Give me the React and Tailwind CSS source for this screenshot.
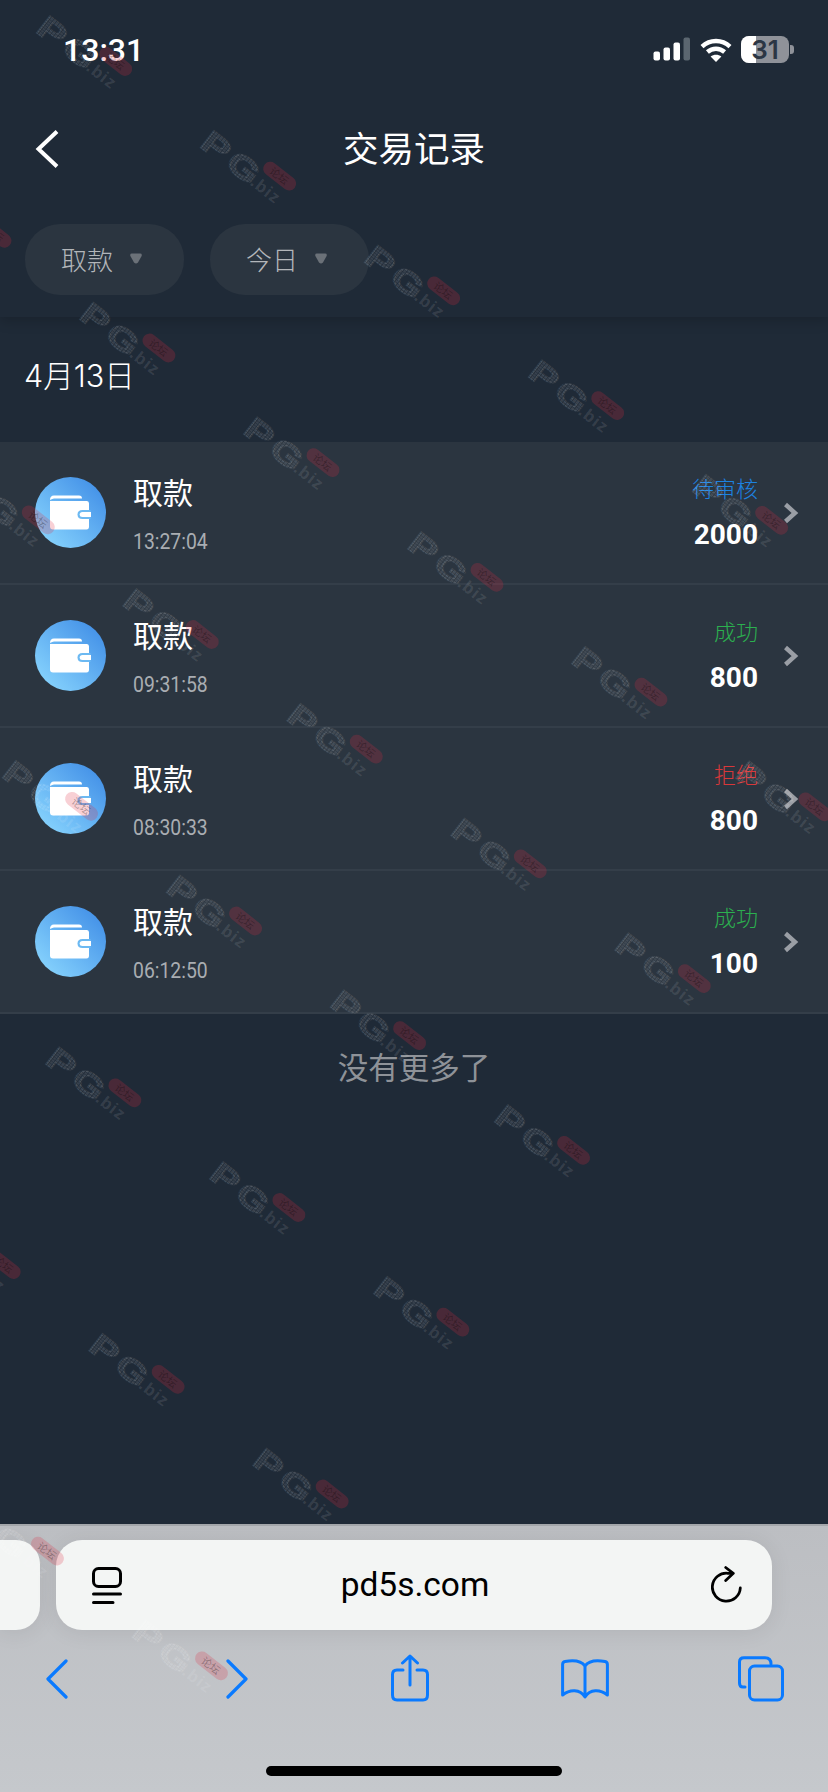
const CJK = "font-['Noto_Sans_CJK_SC','Noto_Sans',sans-serif]";

// Highest lattice column present in each watermark row, and the lowest worth drawing.
const MAX_COL = [4, 4, 3, 2, 1, 0, -1];
const MIN_COL = [0, -1, -1, -1, -1, -2, -2];

function Watermarks() {
  const marks = [];
  MAX_COL.forEach((max, n) => {
    for (let m = MIN_COL[n]; m <= max; m++) {
      marks.push([50 + 164 * m + 43.3 * n, 14 + 114.7 * m + 286.5 * n]);
    }
  });
  return (
    <svg className="absolute left-0 top-0 pointer-events-none" width="828" height="1792" viewBox="0 0 828 1792">
      <defs>
        <pattern id="wmDots" width="2.5" height="2.5" patternUnits="userSpaceOnUse">
          <rect width="2" height="2" fill="rgba(255,255,255,0.11)" />
        </pattern>
      </defs>
      {marks.map(([x, y], i) => (
        <g key={i} transform={`translate(${x} ${y}) rotate(38)`}>
          <g transform="scale(1.35 1)">
            <text x="-1" y="23" fontFamily="Liberation Sans" fontWeight="700" fontSize="31" fill="url(#wmDots)" stroke="url(#wmDots)" strokeWidth="1.6">P</text>
            <text x="23" y="23" fontFamily="Liberation Sans" fontWeight="700" fontSize="31" fill="url(#wmDots)" stroke="url(#wmDots)" strokeWidth="1.6">G</text>
          </g>
          <rect x="62" y="-10" width="38" height="14" rx="7" fill="rgba(222,42,62,0.22)" />
          <text x="70" y="1" fontFamily="Noto Sans CJK SC" fontSize="10.5" fill="rgba(0,0,0,0.3)">论坛</text>
          <text x="62" y="22" fontFamily="Liberation Sans" fontWeight="700" fontSize="17" letterSpacing="1.2" fill="rgba(255,255,255,0.11)">.biz</text>
        </g>
      ))}
    </svg>
  );
}

function StatusBar() {
  return (
    <div className="h-[99px] flex items-center justify-between pl-[63px] pr-[34px]">
      <span className="font-['Roboto',sans-serif] font-medium text-[32px] leading-none text-white">13:31</span>
      <div className="flex items-center">
        <svg width="38" height="24" viewBox="0 0 38 24" className="mt-[-1px]">
          <rect x="0.5" y="14.5" width="6.5" height="9" rx="2" fill="#fff" />
          <rect x="10.5" y="10.5" width="6.5" height="13" rx="2" fill="#fff" />
          <rect x="20.5" y="5.5" width="6.5" height="18" rx="2" fill="#fff" />
          <rect x="30.5" y="0.5" width="6.5" height="23" rx="2" fill="#5b6670" />
        </svg>
        <svg width="32" height="24" viewBox="0 0 32 24" className="ml-[9px]" fill="none" stroke="#fff" strokeWidth="4.4">
          <path d="M2 8.6 C10 1.2 22 1.2 30 8.6" />
          <path d="M7.4 14 C12.4 9.6 19.6 9.6 24.6 14" />
          <path d="M16 24 L10.6 18.6 C13.8 16 18.2 16 21.4 18.6 Z" fill="#fff" stroke="none" />
        </svg>
        <div className="ml-[9px] relative w-[48px] h-[27px] rounded-[8px] overflow-hidden bg-[#8f9299] flex items-center justify-center">
          <div className="absolute left-0 top-0 bottom-0 w-[15px] bg-white" />
          <span className="relative font-['Inter',sans-serif] font-semibold text-[26px] leading-none text-[#2b3644]">31</span>
        </div>
        <div className="ml-[1px] w-[4px] h-[9px] rounded-r-[3px] bg-[#8f9299]" />
      </div>
    </div>
  );
}

function Chip({ label }) {
  return (
    <div className="w-[159px] h-[71px] rounded-[35px] bg-[#2b3540] flex items-center pl-[36px]">
      <span className="text-[26px] leading-none font-extralight text-[#b3b6ba] mt-[-2px]">{label}</span>
      <svg width="12" height="11" viewBox="0 0 12 11" className="ml-[17px] mt-[-2px]">
        <path d="M2 0.5 H10 Q12.4 0.5 11.6 3 L8 9.4 Q6 11.4 4 9.4 L0.4 3 Q-0.4 0.5 2 0.5 Z" fill="#6b7178" />
      </svg>
    </div>
  );
}

function Wallet() {
  return (
    <svg width="41" height="35" viewBox="0 0 41 35">
      <path d="M0 5 Q0 0.5 4 0.5 H29 Q32 0.5 32 3.5 H4 Q2.5 3.5 0 5 Z" fill="#fff" />
      <path d="M0 6 H37 Q39 6 39 8.5 V31.5 Q39 34.5 36.5 34.5 H3 Q0 34.5 0 31.5 Z" fill="#fff" />
      <path d="M32.5 15 H40.5 V24 H32.5 Q27.5 24 27.5 19.5 Q27.5 15 32.5 15 Z" fill="#6cb9f2" />
      <path d="M32.5 17 H41 V22 H32.5 Q29.7 22 29.7 19.5 Q29.7 17 32.5 17 Z" fill="#fff" />
    </svg>
  );
}

function Row({ time, status, statusClass, amount }) {
  return (
    <div className="h-[143px] flex items-center bg-[#2b3540] border-b-2 border-[#343e49] pl-[35px] pr-[29px]">
      <div className="w-[71px] h-[71px] rounded-full bg-linear-to-tr from-[#8fdbff] to-[#3b88e4] flex items-center justify-center">
        <Wallet />
      </div>
      <div className="ml-[27px] mt-[2px] flex flex-col items-start">
        <span className="text-[30px] leading-[40px] text-white">取款</span>
        <span className="mt-[17px] text-[22px] leading-[28px] text-[#a9adb2] font-['Roboto',sans-serif] origin-left scale-x-[0.88]">{time}</span>
      </div>
      <div className="ml-auto mb-[2px] flex flex-col items-end">
        <span className={"text-[22px] leading-[30px] font-extralight " + statusClass}>{status}</span>
        <span className="mt-[16px] text-[28px] leading-[34px] font-bold text-white font-['Roboto',sans-serif]">{amount}</span>
      </div>
      <svg width="16" height="22" viewBox="0 0 16 22" className="ml-[25px]" fill="none" stroke="#9a9ea5" strokeWidth="4.4">
        <path d="M2.5 2.5 L12 11 L2.5 19.5" />
      </svg>
    </div>
  );
}

function ToolbarIcons() {
  return (
    <div className="mt-[26px] flex items-start justify-between pl-[46px] pr-[44px] h-[52px]">
      <svg width="22" height="40" viewBox="0 0 22 40" fill="none" stroke="#0a7aff" strokeWidth="3.2" strokeLinecap="round" strokeLinejoin="round" className="mt-[3px]">
        <path d="M20 2 L2 20 L20 38" />
      </svg>
      <svg width="22" height="40" viewBox="0 0 22 40" fill="none" stroke="#0a7aff" strokeWidth="3.2" strokeLinecap="round" strokeLinejoin="round" className="ml-[158px] mt-[3px]">
        <path d="M2 2 L20 20 L2 38" />
      </svg>
      <svg width="38" height="48" viewBox="0 0 38 48" fill="none" stroke="#0a7aff" strokeWidth="3" strokeLinecap="round" strokeLinejoin="round" className="ml-[143px] mt-[-2px]">
        <path d="M12 16 H6 Q1.5 16 1.5 20.5 V41 Q1.5 46 6 46 H32 Q36.5 46 36.5 41 V20.5 Q36.5 16 32 16 H26" />
        <path d="M19 31 V2 M11.5 9 L19 2 L26.5 9" />
      </svg>
      <svg width="48" height="40" viewBox="0 0 48 40" fill="none" stroke="#0a7aff" strokeWidth="3" strokeLinecap="round" strokeLinejoin="round" className="ml-[132px] mt-[3px]">
        <path d="M24 7 C20 1.5 12 1 4 2.5 Q1.6 3 1.6 5.5 V36 C9 30 19 30 24 38 C29 30 39 30 46.4 36 V5.5 Q46.4 3 44 2.5 C36 1 28 1.5 24 7 Z M24 7 V37" />
      </svg>
      <svg width="46" height="46" viewBox="0 0 46 46" fill="none" stroke="#0a7aff" strokeWidth="3" strokeLinecap="round" strokeLinejoin="round" className="ml-[129px]">
        <path d="M7 31 H5 Q1.5 31 1.5 27 V6 Q1.5 1.8 6 1.8 H27 Q33 1.8 33 8" />
        <rect x="11.5" y="10" width="33" height="34" rx="5" />
      </svg>
    </div>
  );
}

function Toolbar() {
  return (
    <div className="h-[268px] border-t-2 border-[#a4a7ab] bg-linear-to-b from-[#bcbec2] to-[#c5c8cc] flex flex-col">
      <div className="mt-[14px] flex h-[90px]">
        <div className="w-[40px] h-full rounded-r-[24px] bg-[#f3f5f4] shadow-[0_2px_22px_rgba(0,0,0,0.08)]" />
        <div className="ml-[16px] w-[716px] h-full rounded-[26px] bg-[#f3f5f4] shadow-[0_2px_22px_rgba(0,0,0,0.08)] flex items-center justify-between pl-[36px] pr-[29px]">
          <svg width="30" height="37" viewBox="0 0 30 37" fill="none" stroke="#000" strokeWidth="3" strokeLinecap="round">
            <rect x="1.5" y="1.5" width="27" height="18" rx="5" />
            <path d="M1.5 27 H28.5 M1.5 35.5 H21" />
          </svg>
          <span className="font-['Roboto',sans-serif] text-[33.5px] leading-none text-black mr-[3px]">pd5s.com</span>
          <svg width="32" height="38" viewBox="0 0 32 38" fill="none" stroke="#000" strokeWidth="2.8" strokeLinecap="round" strokeLinejoin="round">
            <path d="M21.5 7.3 H17 A14 14 0 1 0 29.3 22" />
            <path d="M14.7 1.5 L22.3 7.3 L14.7 14.5" />
          </svg>
        </div>
      </div>
      <ToolbarIcons />
      <div className="mt-auto mb-[16px] mx-auto w-[296px] h-[10px] rounded-full bg-black" />
    </div>
  );
}

export default function App() {
  return (
    <div className={"relative w-[828px] h-[1792px] overflow-hidden bg-[#1f2a37] flex flex-col " + CJK}>
      <div className="h-[317px] shrink-0 flex flex-col shadow-[0_4px_12px_rgba(0,0,0,0.18)] relative">
        <StatusBar />
        <div className="h-[100px] flex items-center justify-center relative">
          <svg width="24" height="38" viewBox="0 0 24 38" fill="none" stroke="#fff" strokeWidth="4" className="absolute left-[35px] top-[31px]">
            <path d="M22 1.5 L3.5 19 L22 36.5" />
          </svg>
          <span className="text-[35.5px] leading-none text-white mt-[-4px]">交易记录</span>
        </div>
        <div className="mt-[25px] flex pl-[25px] gap-[26px]">
          <Chip label="取款" />
          <Chip label="今日" />
        </div>
      </div>
      <div className="h-[125px] shrink-0 pl-[24px] pt-[39px] text-[30.5px] leading-[40px] font-light text-white font-['Inter','Noto_Sans_CJK_SC',sans-serif]">4月13日</div>
      <div className="flex flex-col">
        <Row time="13:27:04" status="待审核" statusClass="text-[#1d82e0]" amount="2000" />
        <Row time="09:31:58" status="成功" statusClass="text-[#2bb04f]" amount="800" />
        <Row time="08:30:33" status="拒绝" statusClass="text-[#d8383a]" amount="800" />
        <Row time="06:12:50" status="成功" statusClass="text-[#2bb04f]" amount="100" />
      </div>
      <div className="mt-[30px] text-center text-[30.5px] leading-[44px] text-[#8e9298]">没有更多了</div>
      <div className="flex-1" />
      <Toolbar />
      <Watermarks />
    </div>
  );
}
